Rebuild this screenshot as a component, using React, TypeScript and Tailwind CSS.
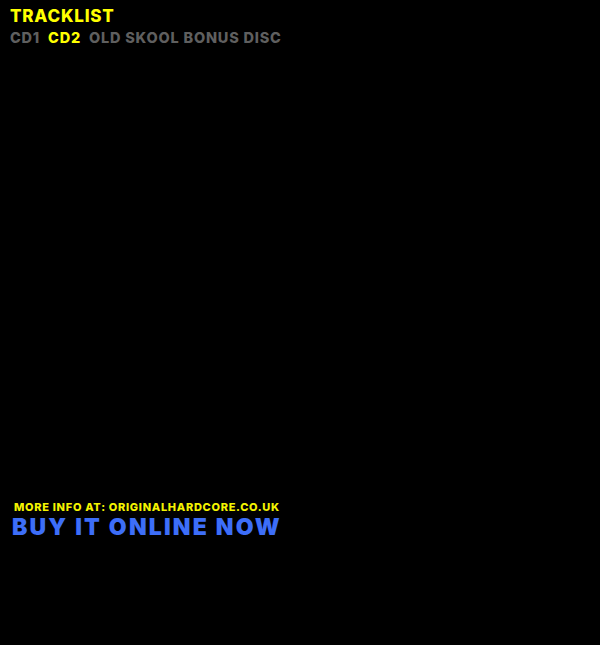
export default function App() {
  return (
    <div className="w-[600px] h-[645px] bg-black flex flex-col" style={{ fontFamily: "Inter, 'Liberation Sans', sans-serif" }}>
      <div className="pl-[10px] pt-[6px]">
        <div className="text-[#ffff00] text-[17px] font-extrabold leading-[20px] tracking-[0.8px]">TRACKLIST</div>
        <div className="flex items-center text-[14.5px] font-extrabold leading-[18px] mt-[3px] text-[#5f5f5f] tracking-[0.8px]">
          <span>CD1</span>
          <span className="ml-[8px] text-[#ffff00]">CD2</span>
          <span className="ml-[8px]">OLD SKOOL BONUS DISC</span>
        </div>
      </div>
      <div className="mt-[453px] pl-[14px]">
        <div className="text-[#f4f400] text-[11px] font-extrabold leading-[14px] tracking-[0.7px]">MORE INFO AT: ORIGINALHARDCORE.CO.UK</div>
        <div className="text-[#3d6ef8] text-[23px] font-black leading-[26px] ml-[-2px] tracking-[2.2px]">BUY IT ONLINE NOW</div>
      </div>
    </div>
  );
}
